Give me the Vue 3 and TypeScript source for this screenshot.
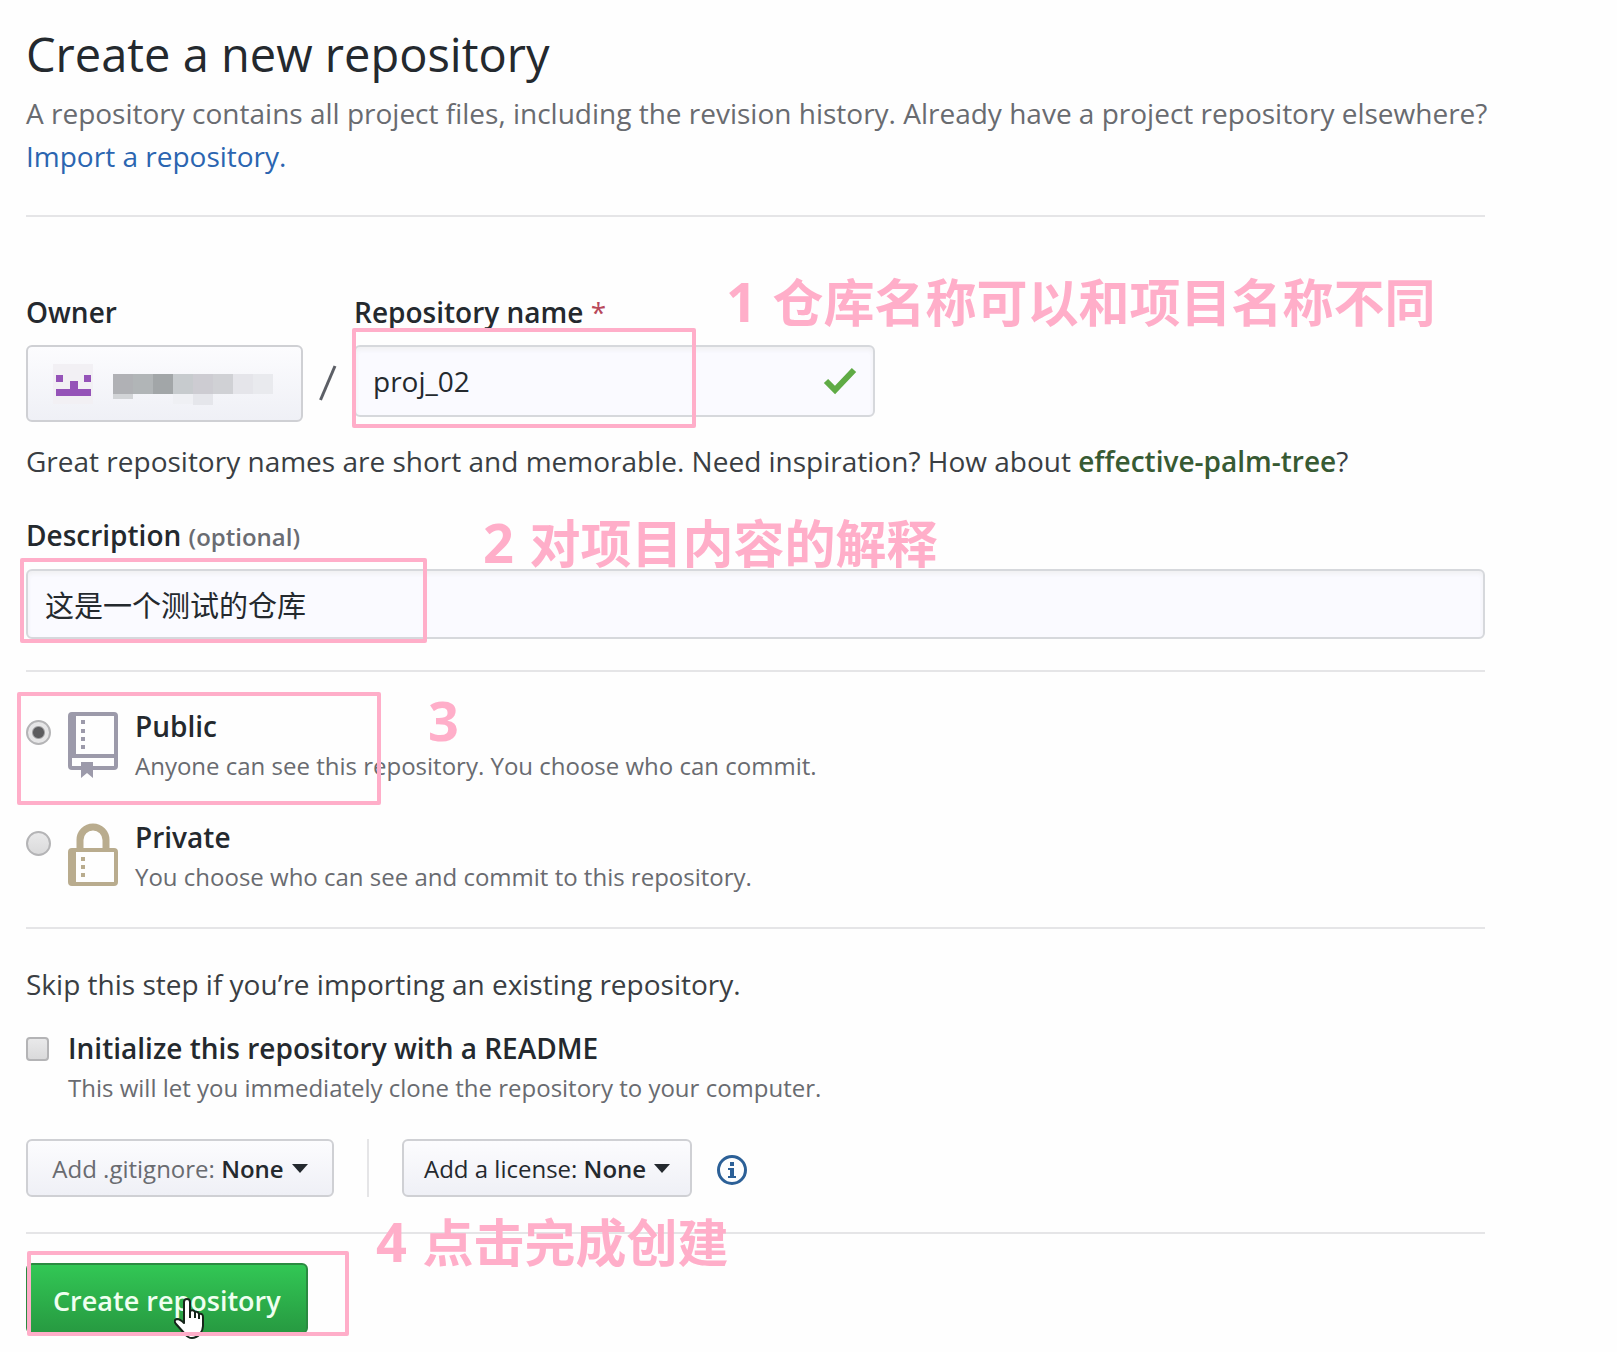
<script setup lang="ts">
import { ref } from 'vue'

interface Block {
  x: number
  y: number
  w: number
  h: number
  fill: string
}

const repositoryName = ref('proj_02')
const description = ref('这是一个测试的仓库')
const visibility = ref('public')
const withReadme = ref(false)

const ownerBlocks: Block[] = [
  { x: 0, y: 0, w: 20, h: 20, fill: '#b0b1b5' },
  { x: 20, y: 0, w: 20, h: 20, fill: '#b1b5b7' },
  { x: 40, y: 0, w: 20, h: 20, fill: '#a2a6a8' },
  { x: 60, y: 0, w: 20, h: 20, fill: '#c7cbce' },
  { x: 80, y: 0, w: 20, h: 20, fill: '#cdccd2' },
  { x: 100, y: 0, w: 20, h: 20, fill: '#d0d1d5' },
  { x: 120, y: 0, w: 20, h: 20, fill: '#e5e5ea' },
  { x: 140, y: 0, w: 20, h: 20, fill: '#e9eaee' },
  { x: 0, y: 20, w: 20, h: 5, fill: '#d2d4d7' },
  { x: 60, y: 20, w: 20, h: 10, fill: '#eff0f4' },
  { x: 80, y: 20, w: 20, h: 11, fill: '#e5e6eb' },
]
</script>

<template>
  <main class="page">
    <header class="intro">
      <h1>Create a new repository</h1>
      <p>
        A repository contains all project files, including the revision history. Already have a project repository
        elsewhere?
        <a href="#import">Import a repository.</a>
      </p>
    </header>

    <form @submit.prevent>
      <section class="identity">
        <div class="names">
          <div class="field">
            <label for="owner">Owner</label>
            <button id="owner" type="button" class="btn owner">
              <svg class="avatar" width="40" height="40" viewBox="0 0 40 40" aria-hidden="true">
                <rect width="40" height="40" fill="#f2f0f4" />
                <path d="M3 11h7v7H3zM31 11h7v7h-7zM17 17h8v8h13v7H3v-7h14z" fill="#9553b8" />
              </svg>
              <svg width="160" height="32" viewBox="0 0 160 32" aria-hidden="true">
                <rect
                  v-for="(block, i) in ownerBlocks"
                  :key="i"
                  :x="block.x"
                  :y="block.y"
                  :width="block.w"
                  :height="block.h"
                  :fill="block.fill"
                />
              </svg>
            </button>
          </div>
          <svg class="slash" width="18" height="36" viewBox="0 0 18 36" aria-hidden="true">
            <path d="M1.5 35L16 1" stroke="#5c5f66" stroke-width="3" />
          </svg>
          <div class="field">
            <label for="repo-name">Repository name <span class="required">*</span></label>
            <div class="control">
              <input id="repo-name" v-model="repositoryName" type="text" class="text" />
              <svg class="check" width="34" height="28" viewBox="0 0 34 28" aria-hidden="true">
                <path d="M3 14l9 9L31 3" fill="none" stroke="#5fab45" stroke-width="6" />
              </svg>
            </div>
            <span class="frame frame-name"></span>
          </div>
        </div>
        <p class="hint">
          Great repository names are short and memorable. Need inspiration? How about
          <strong>effective-palm-tree</strong>?
        </p>
        <p class="note note-name"><b>1</b> 仓库名称可以和项目名称不同</p>
      </section>

      <section class="about">
        <label for="about">Description <small>(optional)</small></label>
        <input id="about" v-model="description" type="text" class="text" />
        <span class="frame frame-about"></span>
        <p class="note note-about"><b>2</b> 对项目内容的解释</p>
      </section>

      <section class="visibility">
        <div class="choice">
          <input id="public" v-model="visibility" type="radio" name="visibility" value="public" />
          <svg class="icon" width="50" height="67" viewBox="0 0 50 67" aria-hidden="true">
            <path
              fill-rule="evenodd"
              fill="#9c9aaa"
              d="M4 0h42q4 0 4 4v50q0 4-4 4H25v8l-6-5-6 5v-8H4q-4 0-4-4V4q0-4 4-4zM8 4v38h38V4zM4 46v8h9v-4h12v4h21v-8z"
            />
            <path fill="#9c9aaa" d="M13 8h4v4h-4zM13 17h4v4h-4zM13 25h4v4h-4zM13 33h4v4h-4z" />
          </svg>
          <label for="public">
            <span class="name">Public</span>
            <span class="detail">Anyone can see this repository. You choose who can commit.</span>
          </label>
        </div>
        <div class="choice">
          <input id="private" v-model="visibility" type="radio" name="visibility" value="private" />
          <svg class="icon" width="50" height="67" viewBox="0 0 50 67" aria-hidden="true">
            <path d="M12 26V17a13 13 0 0 1 26 0v9" fill="none" stroke="#b9ac8e" stroke-width="7" />
            <path
              fill-rule="evenodd"
              fill="#b9ac8e"
              d="M4 25h42q4 0 4 4v30q0 4-4 4H4q-4 0-4-4V29q0-4 4-4zM8 29v30h38V29z"
            />
            <path fill="#b9ac8e" d="M13 34h4v4h-4zM13 42h4v4h-4zM13 50h4v4h-4z" />
          </svg>
          <label for="private">
            <span class="name">Private</span>
            <span class="detail">You choose who can see and commit to this repository.</span>
          </label>
        </div>
        <span class="frame frame-public"></span>
        <p class="note note-public"><b>3</b></p>
      </section>

      <section class="setup">
        <p class="hint">Skip this step if you’re importing an existing repository.</p>
        <div class="readme">
          <input id="readme" v-model="withReadme" type="checkbox" />
          <label for="readme">
            <span class="name">Initialize this repository with a README</span>
            <span class="detail">This will let you immediately clone the repository to your computer.</span>
          </label>
        </div>
        <div class="menus">
          <button type="button" class="btn menu muted" aria-haspopup="menu">
            <span>Add .gitignore: <b>None</b></span><i class="caret"></i>
          </button>
          <span class="divider"></span>
          <button type="button" class="btn menu" aria-haspopup="menu">
            <span>Add a license: <b>None</b></span><i class="caret"></i>
          </button>
          <svg class="info" width="32" height="32" viewBox="0 0 32 32" role="img" aria-label="License information">
            <circle cx="16" cy="16" r="13.5" fill="none" stroke="#2c6097" stroke-width="3" />
            <path d="M14 8h4v4h-4zM12 14h6v8h2v2h-8v-2h2v-6h-2z" fill="#2c6097" />
          </svg>
        </div>
      </section>

      <section class="finish">
        <button type="submit" class="create">Create repository</button>
        <svg class="pointer" width="32" height="42" viewBox="0 0 32 42" aria-hidden="true">
          <path
            d="M10 25V4q0-3 3-3t3 3v9q3-2 5 1 3-1 4 2 4-1 4 3v9q0 4-3 8-4 4-8 4t-7-4l-9-10q-3-4 1-5 3 0 7 4z"
            fill="#fff"
            stroke="#16251a"
            stroke-width="2"
            stroke-linejoin="round"
          />
          <path d="M16 13v7M21 14v6M25 16v5" stroke="#16251a" stroke-width="2" />
        </svg>
        <span class="frame frame-create"></span>
        <p class="note note-create"><b>4</b> 点击完成创建</p>
      </section>
    </form>
  </main>
</template>

<style>
body {
  margin: 0;
  background: #fefefe;
}
</style>

<style scoped>
.page {
  box-sizing: border-box;
  padding: 24px 132px 8px 26px;
  color: #24292e;
  font-family: 'Open Sans', 'Noto Sans', 'Noto Sans CJK SC', sans-serif;
  font-size: 28px;
  line-height: 43px;
}

h1,
p {
  margin: 0;
  font-weight: 400;
}

h1 {
  font-size: 47px;
  line-height: 60px;
}

.intro {
  padding-bottom: 37px;
  border-bottom: 2px solid #e5e5e7;
}

.intro p {
  margin: 8px -16px 0 0;
  color: #696b70;
}

.intro a {
  display: block;
  color: #2b65b0;
  text-decoration: none;
}

section {
  position: relative;
}

.identity {
  padding-top: 75px;
}

.names {
  display: flex;
  align-items: flex-start;
}

.field {
  position: relative;
}

label {
  display: block;
  font-weight: 600;
  line-height: 40px;
}

.field .btn,
.field .control {
  margin-top: 13px;
}

.btn {
  box-sizing: border-box;
  display: flex;
  align-items: center;
  border: 2px solid #cfd0d4;
  border-radius: 6px;
  background: linear-gradient(#fcfcfe, #eff0f6);
  color: inherit;
  font: inherit;
}

.owner {
  width: 277px;
  height: 77px;
  padding: 0 25px;
  gap: 20px;
}

.owner svg:last-child {
  margin-top: 12px;
}

.slash {
  margin: 73px 17px 0 16px;
}

.required {
  color: #b8485a;
  font-weight: 400;
}

.control {
  display: flex;
  align-items: center;
  position: relative;
  width: 521px;
}

.text {
  box-sizing: border-box;
  display: block;
  width: 100%;
  height: 72px;
  padding: 0 17px;
  border: 2px solid #d6d8dc;
  border-radius: 6px;
  outline: 0;
  background: #fafaff;
  box-shadow: inset 0 3px 4px #f0f0f3;
  color: inherit;
  font: inherit;
}

.check {
  position: absolute;
  right: 18px;
}

.hint {
  color: #3a3e43;
}

.identity .hint {
  margin-top: 18px;
}

.hint strong {
  color: #375a33;
  font-weight: 600;
}

.about {
  padding: 32px 0 31px;
  border-bottom: 2px solid #e5e5e7;
}

.about .text {
  height: 70px;
  margin-top: 12px;
  font-size: 29px;
}

small {
  color: #6a6c72;
  font-size: 24px;
}

.visibility {
  display: grid;
  gap: 33px;
  padding: 34px 0 32px;
  border-bottom: 2px solid #e5e5e7;
}

.choice,
.readme {
  display: flex;
  align-items: flex-start;
}

.name,
.detail {
  display: block;
}

.detail {
  margin-top: 2px;
  color: #696b70;
  font-size: 24px;
  font-weight: 400;
  line-height: 36px;
}

input[type='radio'],
input[type='checkbox'] {
  appearance: none;
  box-sizing: border-box;
  flex: none;
  border: 2px solid #b4b4b6;
  background: linear-gradient(#e9e9ea, #dadadb);
}

input[type='radio'] {
  width: 25px;
  height: 25px;
  margin: 14px 0 0;
  border-radius: 50%;
}

input[type='radio']:checked {
  background: radial-gradient(circle, #5c5c5e 5px, #e6e6e7 7px);
}

.icon {
  margin: 6px 17px 0;
}

.setup {
  padding: 34px 0 35px;
  border-bottom: 2px solid #e5e5e7;
}

.readme {
  gap: 19px;
  margin-top: 22px;
}

input[type='checkbox'] {
  width: 23px;
  height: 24px;
  margin: 9px 0 0;
  border-radius: 4px;
}

.menus {
  display: flex;
  align-items: center;
  margin-top: 33px;
}

.menu {
  justify-content: center;
  min-width: 290px;
  height: 58px;
  padding: 0 20px;
  gap: 8px;
  font-size: 24px;
}

.menu b {
  color: #24292e;
  font-weight: 600;
}

.muted {
  min-width: 308px;
  color: #696b70;
}

.caret {
  border: 8px solid transparent;
  border-top: 9px solid #24292e;
  border-bottom: 0;
}

.divider {
  width: 2px;
  height: 58px;
  margin: 0 33px;
  background: #e5e5e7;
}

.info {
  margin: 4px 0 0 24px;
}

.finish {
  padding-top: 29px;
}

.create {
  display: block;
  height: 71px;
  padding: 4px 25px 0;
  border: 2px solid #2b8a41;
  border-radius: 6px;
  background: linear-gradient(#32c755, #279a41);
  color: #effff0;
  font: inherit;
  font-size: 27px;
  font-weight: 600;
}

.pointer {
  position: absolute;
  top: 64px;
  left: 148px;
}

.frame {
  position: absolute;
  box-sizing: border-box;
  border: 4px solid #ffaec9;
  border-radius: 2px;
  pointer-events: none;
}

.frame-name {
  top: 36px;
  left: -2px;
  width: 344px;
  height: 100px;
}

.frame-about {
  top: 75px;
  left: -6px;
  width: 407px;
  height: 85px;
}

.frame-public {
  top: 20px;
  left: -9px;
  width: 364px;
  height: 113px;
}

.frame-create {
  top: 17px;
  left: 1px;
  width: 322px;
  height: 85px;
}

.note {
  position: absolute;
  color: #ffaec9;
  font-family: 'Noto Sans CJK SC', sans-serif;
  font-size: 51px;
  font-weight: 700;
  line-height: 60px;
  white-space: nowrap;
}

.note b {
  margin-right: 4px;
  font-family: 'Open Sans', sans-serif;
  font-size: 54px;
  font-weight: 700;
}

.note-name {
  top: 53px;
  left: 700px;
}

.note-about {
  top: 28px;
  left: 457px;
}

.note-public {
  top: 17px;
  left: 402px;
}

.note-create {
  top: -24px;
  left: 350px;
}
</style>
